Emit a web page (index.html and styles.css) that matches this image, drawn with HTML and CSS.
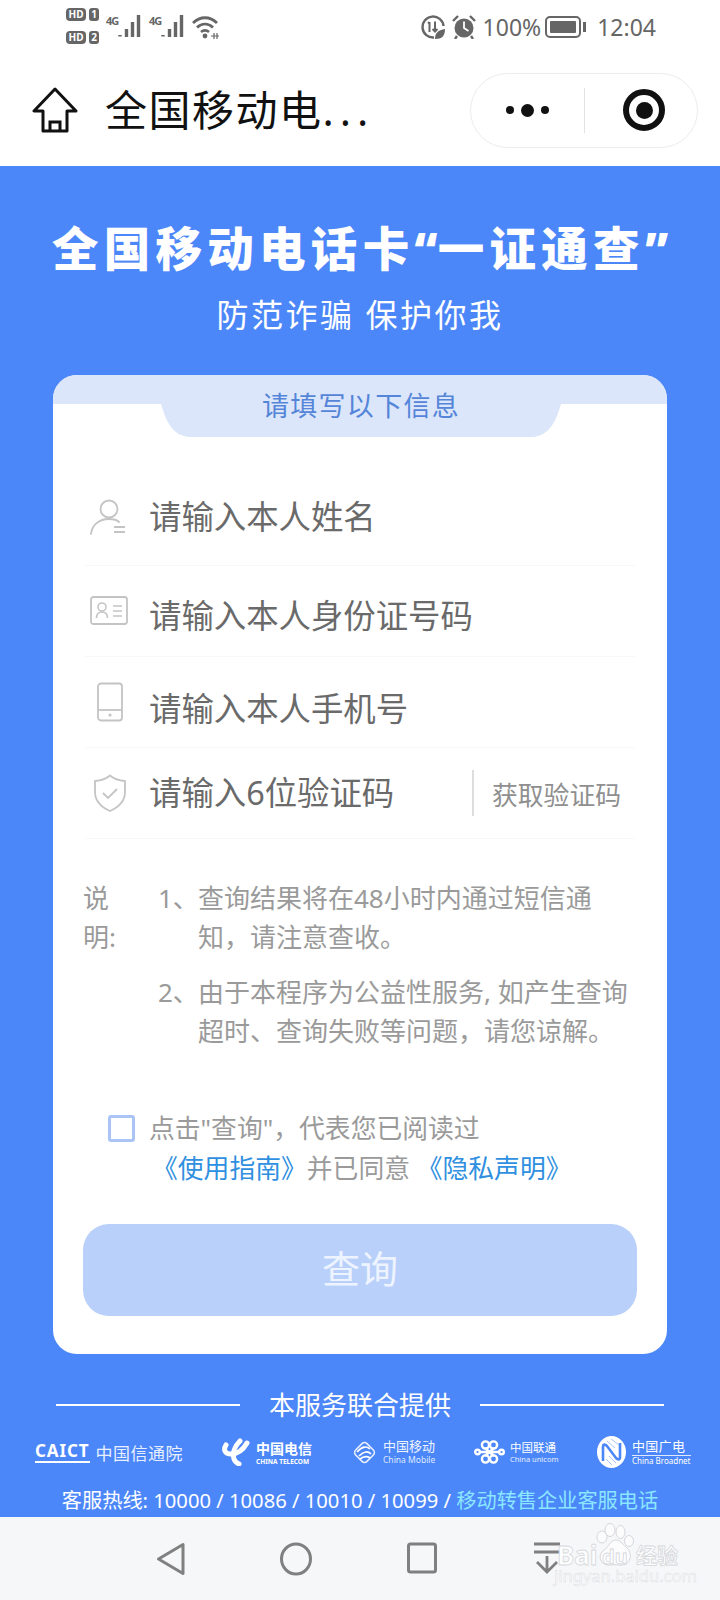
FILE: index.html
```html
<!DOCTYPE html>
<html lang="zh-CN">
<head>
  <meta charset="UTF-8">
  <meta name="viewport" content="width=device-width, initial-scale=1.0">
  <title>全国移动电话卡一证通查</title>
  <link rel="stylesheet" href="styles.css">
</head>
<body>

<div class="phone">
  <!-- status bar -->
  <div class="status-bar">
    <div class="status-left">
      <div class="sims">
        <div class="sim"><span class="hd">HD</span><span class="sim-no">1</span></div>
        <div class="sim"><span class="hd">HD</span><span class="sim-no">2</span></div>
      </div>
      <div class="signal">
        <span class="net">4G</span>
        <svg width="24" height="24" viewBox="0 0 24 24"><path d="M2 21v1.500M8.500 15v8M14.500 8v15M20.500 1v22" stroke="#666" stroke-width="3.400" fill="none"/></svg>
      </div>
      <div class="signal">
        <span class="net">4G</span>
        <svg width="24" height="24" viewBox="0 0 24 24"><path d="M2 21v1.500M8.500 15v8M14.500 8v15M20.500 1v22" stroke="#666" stroke-width="3.400" fill="none"/></svg>
      </div>
      <svg class="wifi" width="28" height="24" viewBox="0 0 28 24"><path d="M1 8c7-7 17-7 24 0M5 12.500c5-4.500 11-4.500 16 0M9 17c2.500-2 5.500-2 8 0" stroke="#666" stroke-width="2.800" fill="none"/><circle cx="13" cy="21" r="2.400" fill="#666"/><path d="M19 21h8M22 18v6M25 18v6" stroke="#666" stroke-width="1.200" fill="none"/></svg>
    </div>
    <div class="status-right">
      <svg width="24" height="24" viewBox="0 0 24 24"><path d="M13 22.500A10.500 10.500 0 1 1 22.500 11" fill="none" stroke="#666" stroke-width="2.400"/><path d="M8.500 7v10M7 8.500l1.500-1.500M14 6.500v10M11.500 14l2.500 2.500 2.500-2.500" stroke="#666" stroke-width="2" fill="none"/><path d="M14 24c0-6 3-9 10-10 0 7-3 10-10 10z" fill="#666"/></svg>
      <svg width="24" height="24" viewBox="0 0 24 24"><circle cx="12" cy="13" r="9.500" fill="#666"/><path d="M12 6.500V13l4.500 3" stroke="#fff" stroke-width="1.800" fill="none"/><path d="M1 6l5-5M23 6l-5-5M5 21l-2 3M19 21l2 3" stroke="#666" stroke-width="2.400"/></svg>
      <span class="percent">100%</span>
      <div class="battery"><div class="battery-fill"></div></div>
      <span class="clock">12:04</span>
    </div>
  </div>

  <!-- mini program nav -->
  <div class="nav-bar">
    <svg class="home-icon" width="48" height="46" viewBox="0 0 48 46"><path d="M23 2L2 24h9v20h24V24h9z" fill="none" stroke="#111" stroke-width="3" stroke-linejoin="round"/><path d="M18 44v-9h10v9" fill="none" stroke="#111" stroke-width="3"/></svg>
    <div class="nav-title">全国移动电<span class="dots">...</span></div>
    <div class="capsule">
      <div class="capsule-dots"><span class="dot"></span><span class="dot big"></span><span class="dot"></span></div>
      <div class="capsule-line"></div>
      <div class="capsule-target"><span></span></div>
    </div>
  </div>

  <div class="main">
    <h1 class="title">全国移动电话卡<span class="quote">“</span>一证通查<span class="quote">”</span></h1>
    <p class="subtitle">防范诈骗 保护你我</p>

    <div class="card">
      <div class="card-head">
        <div class="card-tab">请填写以下信息</div>
      </div>

      <div class="form">
        <div class="row row-name">
          <svg class="row-icon" width="44" height="38" viewBox="0 0 44 38"><circle cx="21" cy="11" r="8.500" fill="none" stroke="#c4c4c4" stroke-width="1.800"/><path d="M3 36c1-9 8-15 18-15 4 0 8 1 10 3" fill="none" stroke="#c4c4c4" stroke-width="1.800" stroke-linecap="round"/><path d="M26 29h11M26 34h11" stroke="#c4c4c4" stroke-width="1.800"/></svg>
          <span class="row-text">请输入本人姓名</span>
        </div>
        <div class="row">
          <svg class="row-icon" width="40" height="30" viewBox="0 0 40 30"><rect x="1" y="1" width="36" height="27" rx="2.500" fill="none" stroke="#c4c4c4" stroke-width="1.800"/><circle cx="12" cy="11" r="4" fill="none" stroke="#c4c4c4" stroke-width="1.600"/><path d="M6.500 22c0-4 2.500-6 5.500-6s5.500 2 5.500 6" fill="none" stroke="#c4c4c4" stroke-width="1.600"/><path d="M23 10h9M23 15h9M23 20h9" stroke="#c4c4c4" stroke-width="1.600"/></svg>
          <span class="row-text text-low">请输入本人身份证号码</span>
        </div>
        <div class="row">
          <svg class="row-icon" width="28" height="40" viewBox="0 0 28 40"><rect x="2" y="1.500" width="24" height="37" rx="3" fill="none" stroke="#c4c4c4" stroke-width="1.800"/><path d="M2 28h24" stroke="#c4c4c4" stroke-width="1.800"/><circle cx="14" cy="33" r="1.600" fill="#c4c4c4"/></svg>
          <span class="row-text text-lower">请输入本人手机号</span>
        </div>
        <div class="row">
          <svg class="row-icon" width="34" height="38" viewBox="0 0 34 38"><path d="M17 1.500c4 3.500 9 5 15 5.500v11c0 9-6 15-15 19C8 33 2 27 2 18V7c6-.500 11-2 15-5.500z" fill="none" stroke="#c4c4c4" stroke-width="1.800" stroke-linejoin="round"/><path d="M10 19l5 5 9-9" fill="none" stroke="#c4c4c4" stroke-width="1.800"/></svg>
          <span class="row-text">请输入6位验证码</span>
          <span class="get-code">获取验证码</span>
        </div>
      </div>

      <div class="notes">
        <div class="notes-label">说<br>明:</div>
        <div class="notes-list">
          <div class="note"><span class="note-no">1、</span><span>查询结果将在48小时内通过短信通<br>知，请注意查收。</span></div>
          <div class="note"><span class="note-no">2、</span><span>由于本程序为公益性服务, 如产生查询<br>超时、查询失败等问题，请您谅解。</span></div>
        </div>
      </div>

      <div class="agree">
        <span class="checkbox"></span>
        <p class="agree-text">点击"查询"，代表您已阅读过<br><a class="link link-first">《使用指南》</a>并已同意 <a class="link">《隐私声明》</a></p>
      </div>

      <button class="query-btn">查询</button>
    </div>

    <div class="provider">
      <span class="provider-line"></span>
      <span>本服务联合提供</span>
      <span class="provider-line"></span>
    </div>

    <div class="logos">
      <div class="logo logo-caict"><span class="caict">CAICT</span><span class="caict-cn">中国信通院</span></div>
      <div class="logo logo-telecom">
        <svg width="28" height="28" viewBox="0 0 28 28"><path d="M4 7C1 12 3 16 9 16c6 0 12-4 16-11" fill="none" stroke="#fff" stroke-width="5" stroke-linecap="round"/><path d="M18 3c-5 5-8 12-6 18 1 3 3 4 5 5" fill="none" stroke="#fff" stroke-width="5" stroke-linecap="round"/></svg>
        <div class="logo-words"><span class="cn-telecom">中国电信</span><span class="en-telecom">CHINA TELECOM</span></div>
      </div>
      <div class="logo logo-mobile">
        <svg width="25" height="25" viewBox="0 0 25 25"><rect x="4.500" y="4.500" width="16" height="16" rx="3.500" transform="rotate(45 12.500 12.500)" fill="none" stroke="#e6eefe" stroke-width="1.600"/><path d="M5 12c5-6 10-6 13-3M7 16c5-5 9-5 12-2M8 19c4-3 7-3 10-1" fill="none" stroke="#fff" stroke-width="1.700"/></svg>
        <div class="logo-words"><span class="cn-mobile">中国移动</span><span class="en-mobile">China Mobile</span></div>
      </div>
      <div class="logo logo-unicom">
        <svg width="31" height="24" viewBox="0 0 31 24"><g fill="none" stroke="#fff" stroke-width="2.400"><circle cx="3.500" cy="12" r="2.300"/><circle cx="27.500" cy="12" r="2.300"/><circle cx="11.500" cy="5" r="3.600"/><circle cx="19.500" cy="5" r="3.600"/><circle cx="11.500" cy="19" r="3.600"/><circle cx="19.500" cy="19" r="3.600"/><path d="M6 12h19M11 8l9 8M20 8l-9 8"/></g></svg>
        <div class="logo-words"><span class="cn-unicom">中国联通</span><span class="en-unicom">China unicom</span></div>
      </div>
      <div class="logo logo-broad">
        <svg width="29" height="32" viewBox="0 0 29 32"><ellipse cx="14.500" cy="16" rx="14.500" ry="16" fill="#fff"/><path d="M6 25V11c0-3 2-3 4-1l9 12c2 2 4 2 4-1V7" fill="none" stroke="#4c87f9" stroke-width="2.600"/><path d="M14 3l8 6M10 5l8 7M12 20l7 7M9 23l6 6" stroke="#a9c6fb" stroke-width="1"/></svg>
        <div class="logo-words"><span class="cn-broad">中国广电</span><span class="en-broad">China Broadnet</span></div>
      </div>
    </div>

    <div class="hotline">客服热线: 10000 / 10086 / 10010 / 10099 / <span class="hotline-link">移动转售企业客服电话</span></div>
  </div>

  <!-- android buttons -->
  <div class="bottom-bar">
    <svg class="nav-back" width="30" height="34" viewBox="0 0 30 34"><path d="M27 2.500v29L2.500 17z" fill="none" stroke="#808080" stroke-width="3" stroke-linejoin="round"/></svg>
    <svg class="nav-home" width="34" height="34" viewBox="0 0 34 34"><ellipse cx="17" cy="17" rx="14.500" ry="15" fill="none" stroke="#808080" stroke-width="3"/></svg>
    <svg class="nav-recent" width="30" height="32" viewBox="0 0 30 32"><rect x="1.500" y="2" width="27" height="28" rx="2" fill="none" stroke="#808080" stroke-width="3"/></svg>
    <svg class="nav-down" width="28" height="32" viewBox="0 0 28 32"><path d="M1 2h26M1 10h26M14 14v16M4 20l10 10 10-10" fill="none" stroke="#808080" stroke-width="2.800"/></svg>
  </div>

  <!-- site watermark -->
  <div class="watermark">
    <svg class="paw" width="46" height="50" viewBox="0 0 46 50"><g fill="#fcfcfd" stroke="#d5d7db" stroke-width="1"><ellipse cx="6" cy="16" rx="5" ry="6"/><ellipse cx="14" cy="9" rx="5" ry="6.500"/><ellipse cx="24.500" cy="11" rx="4.500" ry="6.500"/><ellipse cx="33" cy="20" rx="4.500" ry="5.500"/><path d="M20 19c5 0 7 5 11 8 5 4 5 16-5 17-4 .400-8-1-12 0C4 45 1 34 8 29c5-3 6-10 12-10z"/></g></svg>
    <span class="wm-bai">Bai</span>
    <span class="wm-du">du</span>
    <span class="wm-jy">经验</span>
    <span class="wm-url">jingyan.baidu.com</span>
  </div>
</div>

</body>
</html>
```

FILE: styles.css
```css
* {
  box-sizing: border-box;
}

body {
  margin: 0;
  font-family: "Noto Sans", "Noto Sans CJK SC", sans-serif;
  background-color: #fff;
}

.phone {
  position: relative;
  width: 720px;
  height: 1600px;
  overflow: hidden;
}

/* status bar */
.status-bar {
  height: 65px;
  padding: 8px 64px 0 66px;
  display: flex;
  justify-content: space-between;
  color: #666;
}

.status-left {
  display: flex;
  gap: 7px;
}

.sims {
  display: flex;
  flex-direction: column;
  gap: 10px;
}

.sim {
  display: flex;
  gap: 3px;
  height: 13px;
}

.hd {
  width: 20px;
  background-color: #666;
  color: #fff;
  border-radius: 4px;
  font-size: 10px;
  font-weight: 700;
  line-height: 13px;
  text-align: center;
}

.sim-no {
  width: 10px;
  background-color: #666;
  color: #fff;
  border-radius: 3px;
  font-size: 10px;
  font-weight: 700;
  line-height: 13px;
  text-align: center;
}

.signal {
  display: flex;
  width: 36px;
  height: 30px;
  margin-top: 6px;
}

.signal svg {
  margin-left: -1px;
}

.net {
  width: 13px;
  font-size: 11px;
  font-weight: 700;
  line-height: 14px;
  letter-spacing: -1px;
}

.wifi {
  margin-top: 7px;
}

.status-right {
  display: flex;
  align-items: center;
  height: 38px;
  gap: 7px;
}

.percent {
  font-size: 23px;
}

.battery {
  position: relative;
  width: 36px;
  height: 22px;
  margin-left: -3px;
  margin-right: 9px;
  border: 2px solid #666;
  border-radius: 5px;
  padding: 3px;
}

.battery::after {
  content: "";
  position: absolute;
  right: -7px;
  top: 4px;
  width: 3px;
  height: 10px;
  background-color: #666;
}

.battery-fill {
  height: 100%;
  background-color: #666;
  border-radius: 1px;
}

.clock {
  font-size: 23px;
}

/* nav bar */
.nav-bar {
  height: 101px;
  padding: 0 22px 11px 32px;
  display: flex;
  align-items: center;
}

.home-icon {
  flex-shrink: 0;
}

.nav-title {
  margin-left: 25px;
  font-size: 42px;
  letter-spacing: 1.500px;
  color: #111;
  line-height: 56px;
  white-space: nowrap;
}

.dots {
  letter-spacing: 6px;
}

.capsule {
  margin-left: auto;
  width: 228px;
  height: 75px;
  border: 1px solid #ececec;
  border-radius: 38px;
  display: flex;
  align-items: center;
}

.capsule-dots {
  width: 113px;
  display: flex;
  align-items: center;
  justify-content: center;
  gap: 7px;
}

.dot {
  width: 8px;
  height: 8px;
  border-radius: 50%;
  background-color: #111;
}

.dot.big {
  width: 13px;
  height: 13px;
}

.capsule-line {
  width: 1px;
  height: 45px;
  background-color: #e2e2e2;
}

.capsule-target {
  width: 42px;
  height: 42px;
  margin-left: 38px;
  border: 6px solid #111;
  border-radius: 50%;
  display: flex;
  align-items: center;
  justify-content: center;
}

.capsule-target span {
  width: 17px;
  height: 17px;
  border-radius: 50%;
  background-color: #111;
}

/* blue page */
.main {
  height: 1351px;
  padding-top: 52px;
  background-color: #4c87f9;
  color: #fff;
}

.title {
  margin: 0;
  height: 60px;
  font-size: 46.500px;
  font-weight: 900;
  line-height: 60px;
  letter-spacing: 5.300px;
  text-align: center;
  white-space: nowrap;
}

.quote {
  letter-spacing: 0;
}

.subtitle {
  margin: 15px 0 0;
  font-size: 32px;
  line-height: 44px;
  letter-spacing: 2.500px;
  text-align: center;
}

.card {
  width: 614px;
  height: 979px;
  margin: 38px 0 0 53px;
  padding: 0 30px;
  background-color: #fff;
  border-radius: 24px;
  overflow: hidden;
  color: #9a9a9a;
}

.card-head {
  height: 62px;
  margin: 0 -30px;
  background: linear-gradient(#dbe6fb 29px, #fff 29px);
}

.card-tab {
  width: 400px;
  height: 62px;
  margin-left: 108px;
  padding-bottom: 3px;
  background-color: #dbe6fb;
  clip-path: path("M0 0H400V29C396 42 390 62 370 62H30C10 62 4 42 0 29Z");
  color: #5585d8;
  font-size: 27px;
  line-height: 62px;
  letter-spacing: 1.300px;
  text-align: center;
}

.form {
  margin: 38px 2px 0;
}

.row {
  position: relative;
  height: 91px;
  padding-left: 64px;
  display: flex;
  align-items: center;
  border-bottom: 1px solid #f8f8f8;
}

.row-name {
  padding-bottom: 6px;
}

.row-icon {
  position: absolute;
  left: 25px;
  transform: translateX(-50%);
}

.row-text {
  padding-bottom: 6px;
  color: #6a6a6a;
  font-size: 32.400px;
}

.text-low {
  padding: 4px 0 0;
}

.text-lower {
  padding: 8px 0 0;
}

.get-code {
  margin-left: auto;
  padding: 0 14px 0 18px;
  height: 46px;
  border-left: 2px solid #ddd;
  color: #8f8f8f;
  font-size: 25.800px;
  line-height: 50px;
}

.notes {
  display: flex;
  margin-top: 40px;
  font-size: 26px;
  line-height: 39px;
}

.notes-label {
  width: 75px;
}

.note {
  display: flex;
  margin-bottom: 16px;
}

.note-no {
  width: 40px;
  flex-shrink: 0;
}

.agree {
  display: flex;
  margin: 41px 0 0 25px;
}

.checkbox {
  width: 27px;
  height: 27px;
  margin-top: 7px;
  border: 3px solid #a9c4f5;
  border-radius: 3px;
  flex-shrink: 0;
}

.agree-text {
  margin: 0 0 0 14px;
  font-size: 25.800px;
  line-height: 40px;
  color: #9a9a9a;
}

.link {
  color: #2f8fe0;
}

.link-first {
  margin-left: 3px;
}

.query-btn {
  display: block;
  width: 554px;
  height: 92px;
  margin-top: 36px;
  padding-bottom: 8px;
  border: none;
  border-radius: 26px;
  background-color: #b9d0fb;
  color: #eef4ff;
  font-family: inherit;
  font-size: 38px;
}

/* providers */
.provider {
  margin-top: 33px;
  padding: 0 56px;
  display: flex;
  align-items: center;
  justify-content: space-between;
  font-size: 26px;
  line-height: 36px;
}

.provider-line {
  width: 184px;
  height: 2px;
  background-color: #fff;
}

.logos {
  height: 40px;
  margin-top: 9px;
  padding-left: 35px;
  display: flex;
  align-items: center;
  gap: 39px;
}

.logo {
  display: flex;
  align-items: center;
  gap: 6px;
}

.logo svg {
  flex-shrink: 0;
}

.logo-caict {
  width: 148px;
}

.logo-telecom {
  width: 91px;
}

.logo-mobile {
  width: 83px;
}

.logo-unicom {
  width: 83px;
  gap: 5px;
}

.logo-broad {
  width: 89px;
  margin-left: 1px;
}

.caict {
  font-size: 17px;
  font-weight: 700;
  line-height: 20px;
  letter-spacing: .900px;
  border-bottom: 2px solid #fff;
}

.caict-cn {
  font-size: 17px;
  letter-spacing: .500px;
  color: #e8f0ff;
}

.logo-words {
  display: flex;
  flex-direction: column;
  white-space: nowrap;
}

.cn-telecom {
  font-size: 14px;
  font-weight: 700;
  line-height: 19px;
}

.en-telecom {
  font-size: 6.500px;
  font-weight: 700;
  line-height: 8px;
}

.cn-mobile {
  font-size: 13px;
  line-height: 15px;
  color: #eef4ff;
}

.en-mobile {
  font-size: 8.500px;
  line-height: 11px;
  color: #dfe9fe;
}

.cn-unicom {
  font-size: 11.500px;
  line-height: 13px;
}

.en-unicom {
  font-size: 7.500px;
  line-height: 10px;
  color: #e6eefe;
}

.cn-broad {
  font-size: 13px;
  line-height: 17px;
  letter-spacing: .300px;
  border-bottom: 1px solid #dfe9fe;
}

.en-broad {
  font-size: 8px;
  line-height: 10px;
}

.hotline {
  margin-top: 14px;
  font-size: 20.200px;
  line-height: 28px;
  text-align: center;
  white-space: nowrap;
}

.hotline-link {
  color: #8be6ff;
}

/* bottom bar */
.bottom-bar {
  position: relative;
  height: 83px;
  background-color: #f6f7f9;
}

.bottom-bar svg {
  position: absolute;
  top: 25px;
}

.nav-back {
  left: 156px;
}

.nav-home {
  left: 279px;
}

.nav-recent {
  left: 407px;
}

.nav-down {
  left: 533px;
}

.watermark {
  position: absolute;
  left: 552px;
  top: 1520px;
  width: 132px;
  height: 66px;
  color: #fdfdfd;
}

.paw {
  position: absolute;
  left: 44px;
  top: 1px;
}

.wm-bai,
.wm-du,
.wm-jy {
  position: absolute;
  font-weight: 700;
  white-space: nowrap;
  -webkit-text-stroke: .800px #d5d7db;
}

.wm-bai {
  left: 5px;
  top: 23px;
  font-size: 26px;
  line-height: 24px;
}

.wm-du {
  left: 50px;
  top: 27px;
  font-size: 20px;
  line-height: 20px;
}

.wm-jy {
  left: 84px;
  top: 23px;
  font-size: 21px;
  line-height: 24px;
}

.wm-url {
  position: absolute;
  left: 2px;
  top: 47px;
  font-size: 16.500px;
  line-height: 18px;
  white-space: nowrap;
  -webkit-text-stroke: .500px #dcdee2;
}
```
